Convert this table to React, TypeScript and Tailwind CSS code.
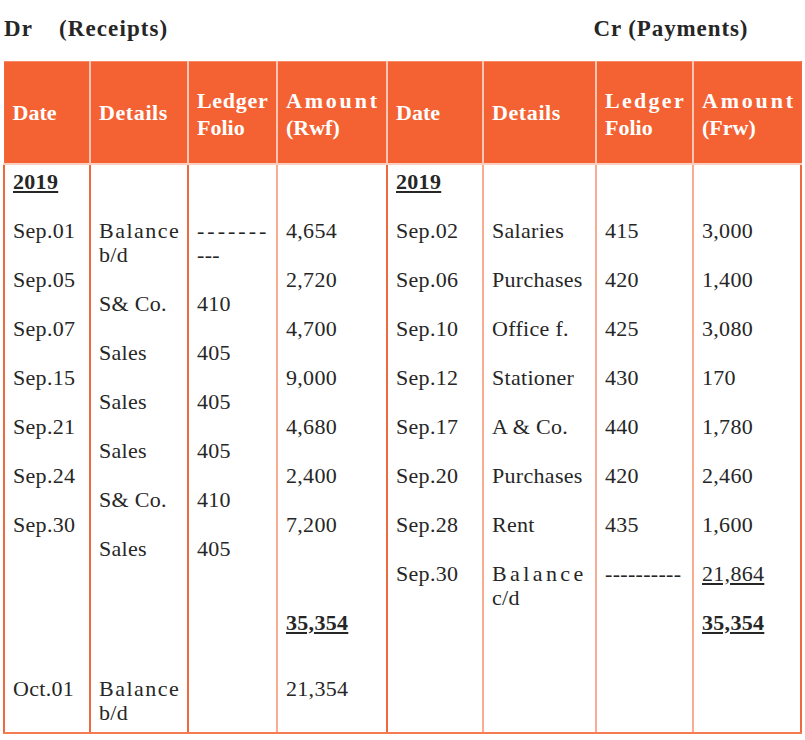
import React from "react";

type Line = string | { t: string; b?: boolean; u?: boolean; cls?: string };

// each body column is a list of 24.5px lines, keyed by line index
type Column = Record<number, Line>;

const ORANGE = "border-[#EE6A3E]";
const SALMON = "border-[#F8AD92]";

const headers: { lines: string[]; cls: string[] }[] = [
  { lines: ["Date"], cls: [""] },
  { lines: ["Details"], cls: ["tracking-[0.6px]"] },
  { lines: ["Ledger", "Folio"], cls: ["tracking-[0.7px]", ""] },
  { lines: ["Amount", "(Rwf)"], cls: ["tracking-[2.8px]", ""] },
  { lines: ["Date"], cls: [""] },
  { lines: ["Details"], cls: ["tracking-[0.6px]"] },
  { lines: ["Ledger", "Folio"], cls: ["tracking-[2.3px]", ""] },
  { lines: ["Amount", "(Frw)"], cls: ["tracking-[2.8px]", ""] },
];

const year: Line = { t: "2019", b: true, u: true };
const total: Line = { t: "35,354", b: true, u: true };

const body: Column[] = [
  { 0: year, 2: "Sep.01", 4: "Sep.05", 6: "Sep.07", 8: "Sep.15", 10: "Sep.21", 12: "Sep.24", 14: "Sep.30" },
  {
    2: { t: "Balance", cls: "tracking-[1.5px]" },
    3: "b/d",
    5: "S& Co.",
    7: "Sales",
    9: "Sales",
    11: "Sales",
    13: "S& Co.",
    15: "Sales",
  },
  { 2: { t: "-------", cls: "tracking-[3px]" }, 3: "---", 5: "410", 7: "405", 9: "405", 11: "405", 13: "410", 15: "405" },
  { 2: "4,654", 4: "2,720", 6: "4,700", 8: "9,000", 10: "4,680", 12: "2,400", 14: "7,200", 18: total },
  { 0: year, 2: "Sep.02", 4: "Sep.06", 6: "Sep.10", 8: "Sep.12", 10: "Sep.17", 12: "Sep.20", 14: "Sep.28", 16: "Sep.30" },
  {
    2: "Salaries",
    4: "Purchases",
    6: "Office f.",
    8: "Stationer",
    10: "A & Co.",
    12: "Purchases",
    14: "Rent",
    16: { t: "Balance", cls: "tracking-[3.4px]" },
    17: "c/d",
  },
  { 2: "415", 4: "420", 6: "425", 8: "430", 10: "440", 12: "420", 14: "435", 16: "----------" },
  { 2: "3,000", 4: "1,400", 6: "3,080", 8: "170", 10: "1,780", 12: "2,460", 14: "1,600", 16: { t: "21,864", u: true }, 18: total },
];

const closing: Column[] = [
  { 0: "Oct.01" },
  { 0: { t: "Balance", cls: "tracking-[1.5px]" }, 1: "b/d" },
  {},
  { 0: "21,354" },
  {},
  {},
  {},
  {},
];

const rightBorders = [ORANGE, ORANGE, SALMON, ORANGE, SALMON, SALMON, SALMON, ORANGE];
const widths = [86, 98, 89, 110, 96, 113, 97, 108];

function Lines({ col, count }: { col: Column; count: number }) {
  return (
    <>
      {Array.from({ length: count }, (_, i) => {
        const line = col[i];
        if (line === undefined) return <div key={i} className="h-[24.5px]" />;
        const l = typeof line === "string" ? { t: line } : line;
        return (
          <div
            key={i}
            className={`h-[24.5px] leading-[24.5px] whitespace-nowrap ${l.b ? "font-bold" : ""} ${
              l.u ? "underline underline-offset-[2px] decoration-[1.5px]" : ""
            } ${l.cls ?? "tracking-[0.3px]"}`}
          >
            {l.t}
          </div>
        );
      })}
    </>
  );
}

export default function App() {
  return (
    <div
      className="w-[805px] h-[740px] bg-white text-[#262626] overflow-hidden"
      style={{ fontFamily: '"Liberation Serif", "Times New Roman", serif' }}
    >
      {/* Title */}
      <div className="h-[61px] pt-[16px] flex text-[23px] leading-[26px] font-bold tracking-[1.1px]">
        <span className="ml-[4px]">Dr</span>
        <span className="ml-[26px]">(Receipts)</span>
        <span className="ml-[425px] tracking-[0.9px]">Cr (Payments)</span>
      </div>

      <table className="ml-[3px] w-[797px] table-fixed border-collapse text-[22px]">
        <colgroup>
          {widths.map((w, i) => (
            <col key={i} style={{ width: w }} />
          ))}
        </colgroup>
        <thead>
          <tr className="h-[102px] bg-[#F46233] text-white">
            {headers.map((h, i) => (
              <th
                key={i}
                className={`text-left align-middle font-bold pl-[8px] pr-0 leading-[27px] border-t border-t-[#F48A66] border-b-2 border-b-[#FBD0C0] ${
                  h.lines.length > 1 ? "pt-[4px]" : ""
                } ${i === 0 ? "border-l border-l-[#EE6A3E]" : ""} ${
                  i === 7 ? "border-r border-r-[#EE6A3E]" : "border-r-2 border-r-[#FBC7B3]"
                }`}
              >
                {h.lines.map((t, j) => (
                  <div key={j} className={`whitespace-nowrap ${h.cls[j]}`}>
                    {t}
                  </div>
                ))}
              </th>
            ))}
          </tr>
        </thead>
        <tbody>
          <tr>
            {body.map((col, i) => (
              <td
                key={i}
                className={`align-top pl-[8px] pt-[5px] pb-[10px] ${i === 0 ? `border-l-2 ${ORANGE}` : ""} border-r-2 ${rightBorders[i]}`}
              >
                <Lines col={col} count={20} />
              </td>
            ))}
          </tr>
          <tr>
            {closing.map((col, i) => (
              <td
                key={i}
                className={`align-top pl-[8px] pt-[7px] pb-[6px] border-b-2 border-b-[#F47B52] ${
                  i === 0 ? `border-l-2 ${ORANGE}` : ""
                } border-r-2 ${rightBorders[i]}`}
              >
                <Lines col={col} count={2} />
              </td>
            ))}
          </tr>
        </tbody>
      </table>
    </div>
  );
}
